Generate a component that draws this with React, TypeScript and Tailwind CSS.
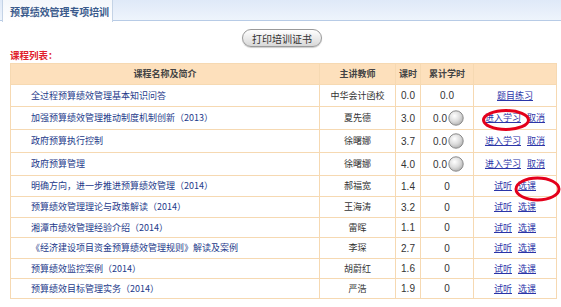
import React from "react";

type Row = {
  name: string;
  teacher: string;
  hours: string;
  acc: string;
  circle?: boolean;
  actions: string[];
  h: number;
};

const rows: Row[] = [
  { name: "全过程预算绩效管理基本知识问答", teacher: "中华会计函校", hours: "0.0", acc: "0.0", actions: ["题目练习"], h: 22 },
  { name: "加强预算绩效管理推动制度机制创新（2013）", teacher: "夏先德", hours: "3.0", acc: "0.0", circle: true, actions: ["进入学习", "取消"], h: 23 },
  { name: "政府预算执行控制", teacher: "徐曙娜", hours: "3.7", acc: "0.0", circle: true, actions: ["进入学习", "取消"], h: 23 },
  { name: "政府预算管理", teacher: "徐曙娜", hours: "4.0", acc: "0.0", circle: true, actions: ["进入学习", "取消"], h: 23 },
  { name: "明确方向，进一步推进预算绩效管理（2014）", teacher: "郝福宽", hours: "1.4", acc: "0", actions: ["试听", "选课"], h: 21 },
  { name: "预算绩效管理理论与政策解读（2014）", teacher: "王海涛", hours: "3.2", acc: "0", actions: ["试听", "选课"], h: 21 },
  { name: "湘潭市绩效管理经验介绍（2014）", teacher: "雷晖", hours: "1.1", acc: "0", actions: ["试听", "选课"], h: 20 },
  { name: "《经济建设项目资金预算绩效管理规则》解读及案例", teacher: "李琛", hours: "2.7", acc: "0", actions: ["试听", "选课"], h: 21 },
  { name: "预算绩效监控案例（2014）", teacher: "胡蔚红", hours: "1.6", acc: "0", actions: ["试听", "选课"], h: 20 },
  { name: "预算绩效目标管理实务（2014）", teacher: "严浩", hours: "1.9", acc: "0", actions: ["试听", "选课"], h: 20 },
];

const font = { fontFamily: '"Noto Sans CJK SC", "Liberation Sans", sans-serif' };

function Circle() {
  return (
    <svg width="16" height="16" viewBox="0 0 16 16" className="inline-block align-middle">
      <defs>
        <radialGradient id="cg" cx="40%" cy="35%" r="65%">
          <stop offset="0%" stopColor="#ffffff" />
          <stop offset="60%" stopColor="#dcdcdc" />
          <stop offset="100%" stopColor="#b5b5b5" />
        </radialGradient>
      </defs>
      <circle cx="8" cy="8" r="7.2" fill="url(#cg)" stroke="#8a8a8a" strokeWidth="1" />
    </svg>
  );
}

export default function App() {
  return (
    <div className="relative w-[561px] h-[307px] bg-white overflow-hidden text-[9px]" style={font}>
      {/* tab bar */}
      <div className="flex h-[21px] bg-gradient-to-b from-[#dfe9f8] to-[#eef4fc] border-b border-[#b7cbe6]">
        <div className="w-[2px]" />
        <div className="w-[111px] h-[22px] bg-gradient-to-b from-[#f4f7fb] to-[#ffffff] border-l border-r border-[#c4d3e6] flex items-center pl-[7px] text-[10px] font-bold text-[#3a5a8c] tracking-[-0.1px]">
          预算绩效管理专项培训
        </div>
      </div>

      {/* button */}
      <div className="flex justify-center pt-[8px] pl-[3px]">
        <div className="w-[80px] h-[18px] rounded-full border border-[#9a9a9a] bg-gradient-to-b from-[#ffffff] to-[#d8d8d8] flex items-center justify-center text-[10px] text-[#333] shadow-[0_1px_1px_rgba(0,0,0,0.2)]">
          打印培训证书
        </div>
      </div>

      <div className="pl-[10px] pt-[2px] h-[16px] text-[9.5px] font-bold text-[#e0202a] leading-[13px]">课程列表：</div>

      {/* table */}
      <div className="pl-[10px]">
        <table className="border-collapse w-[546px] table-fixed border border-[#f6d9b2]">
          <colgroup>
            <col className="w-[309px]" />
            <col className="w-[76px]" />
            <col className="w-[25px]" />
            <col className="w-[53px]" />
            <col className="w-[83px]" />
          </colgroup>
          <thead>
            <tr className="h-[21px] bg-[#fde0bc] text-[#444] font-bold">
              <th className="border border-[#f6d9b2] font-bold text-[9px]">课程名称及简介</th>
              <th className="border border-[#f6d9b2] font-bold text-[9px]">主讲教师</th>
              <th className="border border-[#f6d9b2] font-bold text-[9px]">课时</th>
              <th className="border border-[#f6d9b2] font-bold text-[9px]">累计学时</th>
              <th className="border border-[#f6d9b2]"></th>
            </tr>
          </thead>
          <tbody>
            {rows.map((r, i) => (
              <tr key={i} style={{ height: r.h }}>
                <td className="border border-[#f6d9b2] pl-[20px] text-[#1d3a8a] whitespace-nowrap">{r.name}</td>
                <td className="border border-[#f6d9b2] text-center text-[#333]">{r.teacher}</td>
                <td className="border border-[#f6d9b2] text-center text-[#333] text-[10px]" style={{ fontFamily: '"Liberation Sans", sans-serif' }}>{r.hours}</td>
                <td className="border border-[#f6d9b2] text-center text-[#333] text-[10px]" style={{ fontFamily: '"Liberation Sans", sans-serif' }}>
                  {r.circle ? (
                    <span className="inline-flex items-center gap-[1px] pl-[3px]">
                      <span>{r.acc}</span>
                      <Circle />
                    </span>
                  ) : (
                    r.acc
                  )}
                </td>
                <td className="border border-[#f6d9b2] text-center">
                  <span className="inline-flex gap-[6px] text-[#2b35a8] underline">
                    {r.actions.map((a) => (
                      <span key={a}>{a}</span>
                    ))}
                  </span>
                </td>
              </tr>
            ))}
          </tbody>
        </table>
      </div>

      {/* red annotation ellipses */}
      <svg className="absolute left-[481px] top-[108px]" width="50" height="24" viewBox="0 0 50 24">
        <ellipse cx="25" cy="12" rx="22.5" ry="9.5" fill="none" stroke="#e4001b" strokeWidth="3" />
      </svg>
      <svg className="absolute left-[514px] top-[175px]" width="48" height="28" viewBox="0 0 48 28">
        <ellipse cx="23.5" cy="14" rx="21.5" ry="11" fill="none" stroke="#e4001b" strokeWidth="3" />
      </svg>
    </div>
  );
}
